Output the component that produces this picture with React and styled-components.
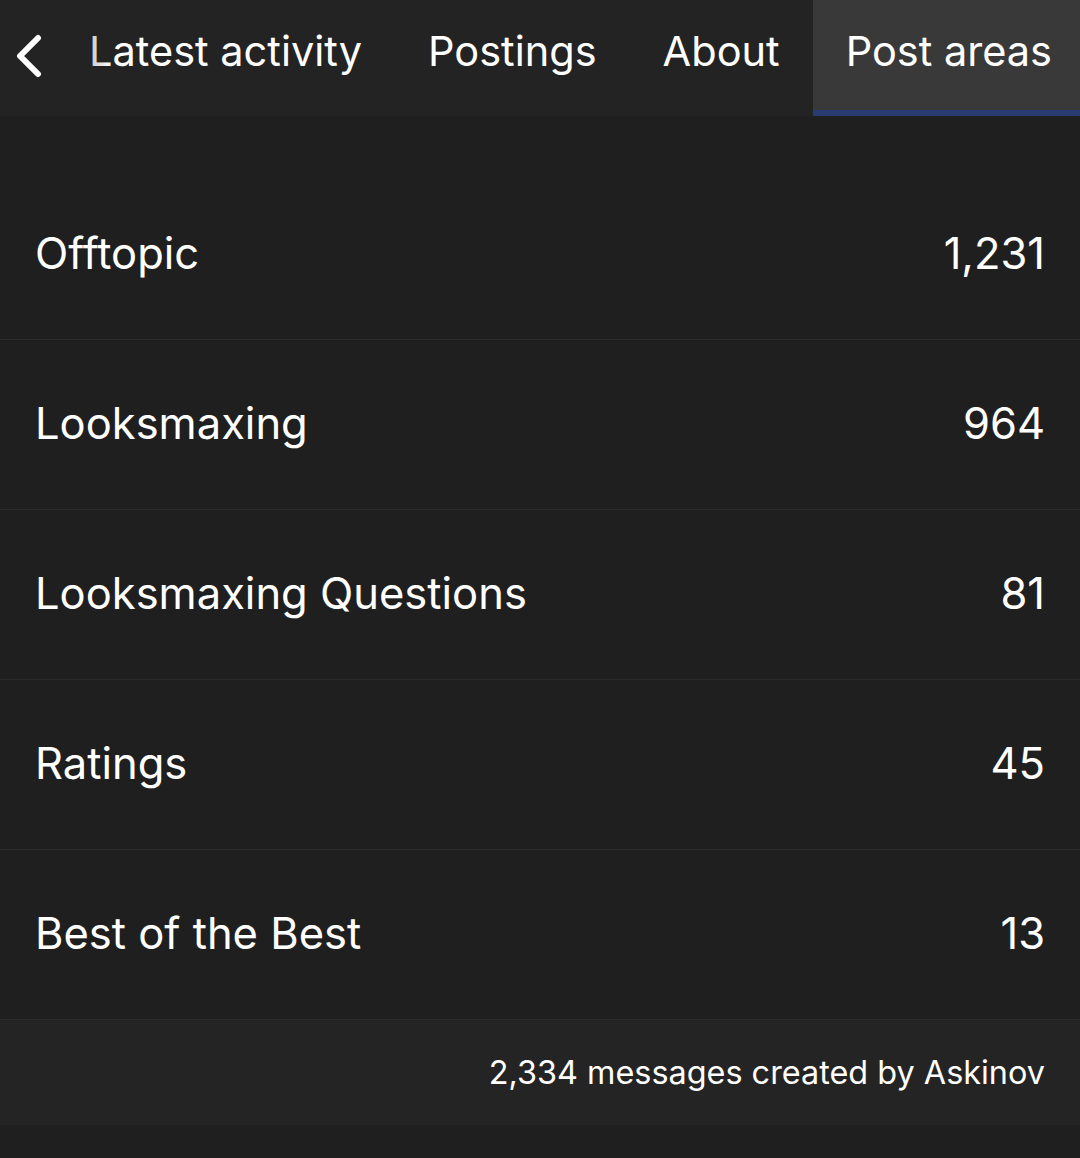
import React from 'react';
import styled, { createGlobalStyle } from 'styled-components';

const GlobalStyle = createGlobalStyle`
  html, body {
    margin: 0;
    padding: 0;
    background: #1f1f1f;
  }
  body {
    font-family: Inter, "Noto Sans", sans-serif;
    color: #ffffff;
  }
`;

const Page = styled.div`
  width: 1080px;
  min-height: 1158px;
  background: #1f1f1f;
`;

const TabBar = styled.div`
  position: relative;
  display: flex;
  align-items: stretch;
  height: 116px;
  background: #232323;
  overflow: hidden;
`;

const BackButton = styled.button`
  position: relative;
  z-index: 2;
  flex-shrink: 0;
  display: flex;
  align-items: center;
  justify-content: flex-start;
  box-sizing: border-box;
  width: 56px;
  padding: 0 0 4px 14px;
  border: none;
  background: #232323;
  cursor: pointer;

  &::after {
    content: '';
    position: absolute;
    top: 0;
    bottom: 0;
    left: 56px;
    width: 56px;
    background: linear-gradient(to right, rgba(35, 35, 35, 0.6), rgba(35, 35, 35, 0));
    pointer-events: none;
  }
`;

const Tab = styled.div`
  flex-shrink: 0;
  display: flex;
  align-items: center;
  padding: 0 33px 8px;
  font-size: 41.5px;
  white-space: nowrap;
  color: #ffffff;
  background: ${props => (props.active ? '#393939' : 'transparent')};
  border-bottom: 6px solid ${props => (props.active ? '#283c72' : 'transparent')};
`;

const List = styled.div`
  margin-top: 54px;
`;

const Row = styled.div`
  display: flex;
  align-items: center;
  justify-content: space-between;
  box-sizing: border-box;
  height: 170px;
  padding: 0 35px 4px;
  border-bottom: 1px solid #2b2b2b;
  font-size: 43.5px;
`;

const Footer = styled.div`
  display: flex;
  align-items: center;
  justify-content: flex-end;
  height: 105px;
  padding: 0 35px;
  background: #242424;
  font-size: 32.4px;
`;

const areas = [
  { name: 'Offtopic', count: '1,231' },
  { name: 'Looksmaxing', count: '964' },
  { name: 'Looksmaxing Questions', count: '81' },
  { name: 'Ratings', count: '45' },
  { name: 'Best of the Best', count: '13' },
];

const ChevronLeft = () => (
  <svg width="30" height="44" viewBox="0 0 30 44">
    <path
      d="M24 4 L6 22 L24 40"
      fill="none"
      stroke="#ffffff"
      strokeWidth="6"
      strokeLinecap="round"
      strokeLinejoin="round"
    />
  </svg>
);

const App = () => (
  <>
    <GlobalStyle />
    <Page>
      <TabBar>
        <BackButton aria-label="Back">
          <ChevronLeft />
        </BackButton>
        <Tab>Latest activity</Tab>
        <Tab>Postings</Tab>
        <Tab>About</Tab>
        <Tab active>Post areas</Tab>
      </TabBar>
      <List>
        {areas.map(area => (
          <Row key={area.name}>
            <span>{area.name}</span>
            <span>{area.count}</span>
          </Row>
        ))}
      </List>
      <Footer>2,334 messages created by Askinov</Footer>
    </Page>
  </>
);

export default App;
